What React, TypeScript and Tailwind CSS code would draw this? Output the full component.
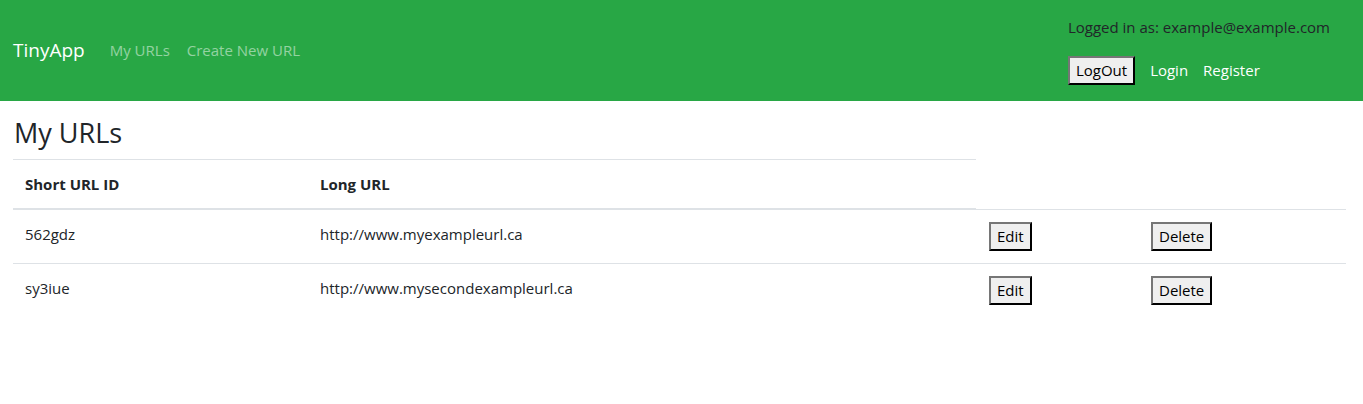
const urls = [
  { id: "562gdz", longURL: "http://www.myexampleurl.ca" },
  { id: "sy3iue", longURL: "http://www.mysecondexampleurl.ca" },
];

const btn =
  "bg-[#efefef] text-black px-[6px] h-[29px] border-2 border-t-[#767676] border-l-[#767676] border-r-black border-b-black border-solid leading-none";

export default function App() {
  return (
    <div className="min-h-screen bg-white text-[#212529] text-[15px] font-['Segoe_UI','Open_Sans',sans-serif]">
      {/* Navbar */}
      <nav className="h-[101px] bg-[#28a745] flex items-center pl-[13px] pr-[33px]">
        <span className="text-[19px] text-white mr-[25px]">TinyApp</span>
        <div className="flex gap-[17px] text-white/50">
          <a href="#">My URLs</a>
          <a href="#">Create New URL</a>
        </div>
        <div className="ml-auto flex flex-col self-stretch pt-[15px] whitespace-nowrap">
          <p className="leading-6">Logged in as: example@example.com</p>
          <div className="flex items-center gap-[15px] mt-[17px]">
            <button className={btn}>LogOut</button>
            <a href="#" className="text-white">Login</a>
            <a href="#" className="text-white">Register</a>
          </div>
        </div>
      </nav>

      {/* Content */}
      <main className="px-[13px] pt-[16px]">
        <h3 className="text-[27px] leading-[1.2] mb-[10px] pl-px">My URLs</h3>
        <table className="w-[1333px] border-collapse text-left">
          <thead>
            <tr>
              <th className="w-[295px] p-3 leading-6 font-bold border-t border-b-2 border-[#dee2e6]">Short URL ID</th>
              <th className="w-[668px] p-3 leading-6 font-bold border-t border-b-2 border-[#dee2e6]">Long URL</th>
            </tr>
          </thead>
          <tbody>
            {urls.map((u) => (
              <tr key={u.id}>
                <td className="align-top p-3 leading-6 border-t border-[#dee2e6]">{u.id}</td>
                <td className="align-top p-3 leading-6 border-t border-[#dee2e6]">{u.longURL}</td>
                <td className="w-[164px] align-top pt-3 pb-3 pl-[13px] border-t border-[#dee2e6]">
                  <button className={btn}>Edit</button>
                </td>
                <td className="w-[206px] align-top pt-3 pb-3 pl-[11px] border-t border-[#dee2e6]">
                  <button className={btn}>Delete</button>
                </td>
              </tr>
            ))}
          </tbody>
        </table>
      </main>
    </div>
  );
}
